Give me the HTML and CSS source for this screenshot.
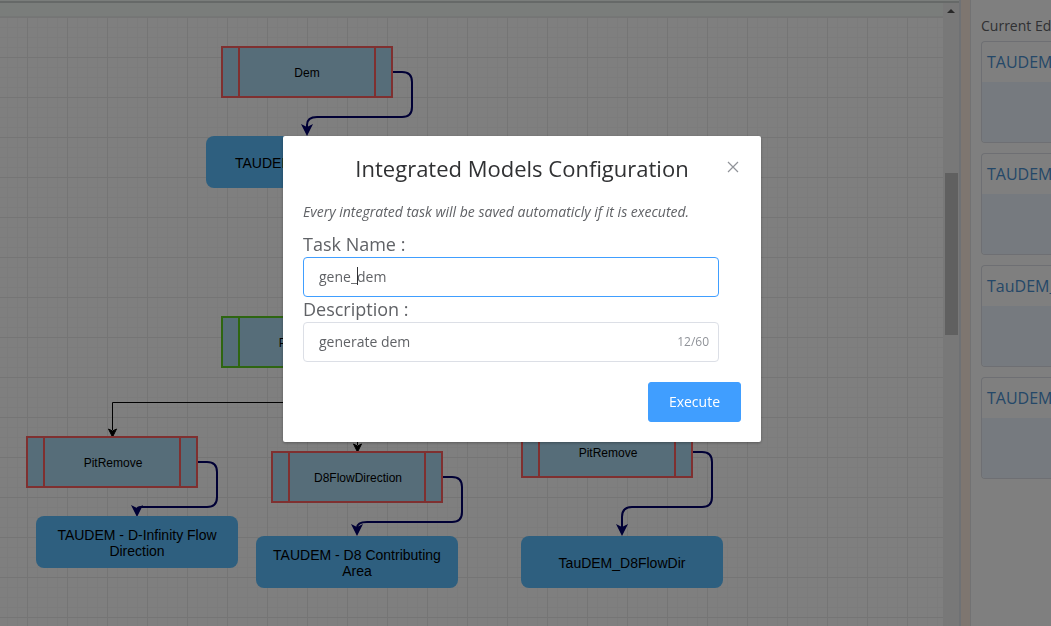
FILE: index.html
```html
<!DOCTYPE html>
<html lang="en">
<head>
<meta charset="utf-8">
<title>Integrated Models</title>
<link rel="stylesheet" href="styles.css">
</head>
<body>
<div class="app">
  <main class="editor">
    <div class="topline"></div>
    <div class="workspace">
      <div class="sheet">
        <div class="toolbar"></div>
        <div class="canvas">
          <svg class="diagram" width="943" height="609" viewBox="0 17 943 609" role="img" aria-label="Task diagram">
            <defs>
              <g id="task">
                <rect width="170" height="50"/>
                <path d="M17 0V50M153 0V50"/>
              </g>
              <rect id="model" width="202" height="52" rx="8"/>
              <path id="head" d="M0 0L-6 -12L0 -9L6 -12Z"/>
              <path id="smallhead" d="M0 0L-4 -8L0 -6L4 -8Z"/>
            </defs>
            <g class="link">
              <path d="M393 72H402Q412 72 412 82V107Q412 117 402 117H317Q307 117 307 125V128"/>
              <path d="M198 462H207Q217 462 217 472V497Q217 507 207 507H141Q137 507 137 510"/>
              <path d="M443 477H452Q462 477 462 487V512Q462 522 452 522H367Q357 522 357 528"/>
              <path d="M693 452H702Q712 452 712 462V497Q712 507 702 507H632Q622 507 622 517V528"/>
            </g>
            <g class="linkhead">
              <use href="#head" x="307" y="136"/>
              <use href="#head" x="137" y="517"/>
              <use href="#head" x="357" y="536"/>
              <use href="#head" x="622" y="536"/>
            </g>
            <path class="flow" d="M300 402.500H112.500V430M357.500 402V445"/>
            <g class="flowhead">
              <use href="#smallhead" x="112.500" y="437"/>
              <use href="#smallhead" x="357.500" y="452"/>
            </g>
            <g class="task">
              <use href="#task" x="222" y="47"/>
              <use href="#task" class="ready" x="222" y="317"/>
              <use href="#task" x="27" y="437"/>
              <use href="#task" x="272" y="452"/>
              <use href="#task" x="522" y="427"/>
            </g>
            <g class="model">
              <use href="#model" x="206" y="136"/>
              <use href="#model" x="36" y="516"/>
              <use href="#model" x="256" y="536"/>
              <use href="#model" x="521" y="536"/>
            </g>
            <g class="tasktext">
              <text x="307" y="77">Dem</text>
              <text x="308" y="347">PitRemove</text>
              <text x="113" y="467">PitRemove</text>
              <text x="358" y="482">D8FlowDirection</text>
              <text x="608" y="457">PitRemove</text>
            </g>
            <g class="modeltext">
              <text class="start" x="235" y="168">TAUDEM</text>
              <text x="137" y="540">TAUDEM - D-Infinity Flow</text>
              <text x="137" y="556">Direction</text>
              <text x="357" y="560">TAUDEM - D8 Contributing</text>
              <text x="357" y="576">Area</text>
              <text x="622" y="568">TauDEM_D8FlowDir</text>
            </g>
          </svg>
        </div>
      </div>
      <div class="scroll">
        <svg width="16" height="16" viewBox="0 0 16 16" aria-hidden="true"><path d="M4 10L8 6L12 10Z" fill="#505050"/></svg>
        <div class="thumb"></div>
      </div>
    </div>
  </main>
  <div class="splitter"></div>
  <aside class="side">
    <div class="sidetitle">Current Ed</div>
    <section class="card"><a class="cardname" href="#">TAUDEM</a><div class="cardbody"></div></section>
    <section class="card"><a class="cardname" href="#">TAUDEM</a><div class="cardbody"></div></section>
    <section class="card"><a class="cardname" href="#">TauDEM_</a><div class="cardbody"></div></section>
    <section class="card"><a class="cardname" href="#">TAUDEM</a><div class="cardbody"></div></section>
  </aside>
</div>
<div class="overlay">
  <form class="dialog" role="dialog" aria-labelledby="dialog-title">
    <h1 class="title" id="dialog-title">Integrated Models Configuration</h1>
    <button class="close" type="button" aria-label="Close">
      <svg width="12" height="12" viewBox="0 0 12 12" aria-hidden="true"><path d="M1 1L11 11M11 1L1 11" stroke="#909399" stroke-width="1.200" fill="none"/></svg>
    </button>
    <p class="note">Every integrated task will be saved automaticly if it is executed.</p>
    <label class="label" for="task-name">Task Name :</label>
    <div class="field">
      <input class="input active" id="task-name" type="text" value="gene_dem">
      <span class="caret"></span>
    </div>
    <label class="label" for="description">Description :</label>
    <div class="field">
      <input class="input" id="description" type="text" maxlength="60" value="generate dem">
      <span class="count">12/60</span>
    </div>
    <div class="actions"><button class="execute" type="button">Execute</button></div>
  </form>
</div>
</body>
</html>
```
FILE: styles.css
```css
* { box-sizing: border-box; }
body { margin: 0; font-family: "Open Sans", sans-serif; font-size: 14px; color: #606266; overflow: hidden; }
.app { display: flex; height: 100vh; background: #fff; overflow: hidden; }
.editor { flex: 1; min-width: 0; display: flex; flex-direction: column; }
.topline { height: 3px; background: #f4faf7; border-bottom: 2px solid #cdd2d0; }
.workspace { flex: 1; min-height: 0; display: flex; }
.sheet { flex: 1; min-width: 0; display: flex; flex-direction: column; overflow: hidden; }
.toolbar { height: 14px; background: #f4faf7; border-bottom: 1px solid #eaeeec; }
.canvas {
  flex: 1;
  min-height: 0;
  overflow: hidden;
  background-color: #fff;
  background-image:
    linear-gradient(90deg, #ebebeb 1px, transparent 1px),
    linear-gradient(#ebebeb 1px, transparent 1px),
    linear-gradient(90deg, #f9f9f9 1px, transparent 1px),
    linear-gradient(#f9f9f9 1px, transparent 1px);
  background-size: 40px 40px, 40px 40px, 10px 10px, 10px 10px;
  background-position: 27px 0, 0 0, 7px 0, 0 0;
}
.diagram { display: block; }
.link path { fill: none; stroke: #00006b; stroke-width: 2; }
.linkhead { fill: #00006b; }
.flow { fill: none; stroke: #000; }
.flowhead { stroke: #000; stroke-width: 1; }
.task { fill: #acdaf2; stroke: #ff6060; stroke-width: 2; }
.ready { stroke: #5ccc22; }
.model { fill: #5dbfff; }
.tasktext, .modeltext { font-family: "Liberation Sans", Arial, sans-serif; text-anchor: middle; fill: #000; }
.tasktext { font-size: 12px; }
.modeltext { font-size: 14px; }
.start { text-anchor: start; }
.scroll { width: 16px; background: #f1f1f1; }
.scroll svg { display: block; }
.thumb { width: 13px; height: 162px; margin: 154px 0 0 2px; background: #c1c1c1; }
.splitter { width: 12px; background: #fcede0; border-left: 2px solid #dfe3e8; border-right: 1px solid #e4e4e6; }
.side { width: 80px; padding: 15px 0 0 10px; overflow: hidden; white-space: nowrap; }
.sidetitle { height: 26px; line-height: 22px; color: #606266; }
.card { height: 102px; margin-bottom: 10px; border: 1px solid #dcdfe6; border-right: 0; border-radius: 4px 0 0 4px; overflow: hidden; }
.cardname { display: block; height: 40px; padding-left: 5px; line-height: 40px; font-size: 16px; color: #4a90d0; text-decoration: none; }
.cardbody { height: 60px; background: #ecf5ff; }
.overlay { position: fixed; inset: 0; display: flex; align-items: flex-start; justify-content: center; padding: 136px 7px 0 0; background: rgba(0, 0, 0, .5); }
.dialog { position: relative; width: 478px; padding: 20px; background: #fff; border-radius: 2px; box-shadow: 0 1px 3px rgba(0, 0, 0, .3); }
.title { margin: 0 0 22px; height: 24px; line-height: 24px; font-size: 22px; font-weight: 400; text-align: center; color: #303133; }
.close { position: absolute; top: 25px; right: 22px; padding: 0; border: 0; background: none; line-height: 0; }
.note { margin: 0 0 10px; line-height: 20px; font-style: italic; }
.label { display: block; line-height: 25px; font-size: 18px; }
.field { position: relative; width: 95%; }
.input { display: block; width: 100%; height: 40px; padding: 0 15px 2px; border: 1px solid #dcdfe6; border-radius: 4px; background: #fff; color: #606266; font: inherit; outline: none; }
.active { border-color: #409eff; }
.caret { position: absolute; left: 54px; top: 10px; width: 1px; height: 18px; background: #303133; }
.count { position: absolute; right: 10px; top: 0; line-height: 40px; font-size: 12px; color: #909399; }
.actions { margin-top: 20px; text-align: right; }
.execute { height: 40px; padding: 0 20px 2px; border: 1px solid #409eff; border-radius: 3px; background: #409eff; color: #fff; font: 500 14px "Open Sans", sans-serif; vertical-align: top; }
```
